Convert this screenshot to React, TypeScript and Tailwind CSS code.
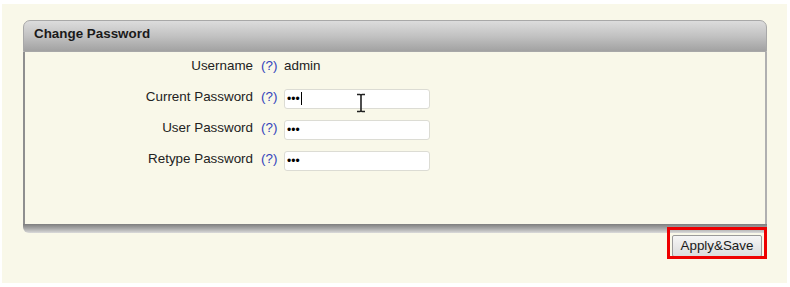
import React from "react";

const rows = [
  { label: "Current Password", caret: true },
  { label: "User Password" },
  { label: "Retype Password" },
];

function Help() {
  return <span className="mt-[2px] text-[#3344bb] w-[23px] shrink-0">(?)</span>;
}

export default function App() {
  return (
    <div className="w-[790px] h-[287px] bg-white" style={{ fontFamily: '"Liberation Sans", Arial, sans-serif' }}>
      <div className="relative ml-[2px] pt-[4px] w-[785px] h-[283px]">
        <div className="bg-[#f9f8e9] h-[279px] pt-[16px] pl-[21px] pr-[18px]">
          <div className="w-[744px]">
            <div className="h-[32px] rounded-t-[7px] border border-[#a8a8a8] bg-gradient-to-b from-[#dcdcdc] via-[#c2c2c2] to-[#a2a2a2] flex items-center pl-[10px] pb-[4px] text-[13.4px] font-bold text-[#1a1a1a]">
              Change Password
            </div>
            <div className="h-[172px] border-l-2 border-r-2 border-l-[#8f8f8f] border-r-[#b0b0b0] bg-[#f9f8e9] text-[13.4px] text-[#222]">
              <div className="h-[29px] pb-[2px] flex items-center">
                <span className="mt-[2px] w-[228px] text-right">Username</span>
                <span className="w-[8px]" />
                <Help />
                <span className="mt-[2px]">admin</span>
              </div>
              {rows.map((r) => (
                <div key={r.label} className="h-[31px] flex items-center">
                  <span className="mt-[2px] w-[228px] text-right">{r.label}</span>
                  <span className="w-[8px]" />
                  <Help />
                  <div className="mt-[4px] w-[146px] h-[20px] bg-white border border-[#dcdcd4] rounded-[3px] flex items-center pl-[2px] text-[12px] leading-none text-black">
                    <span>•••</span>
                    {r.caret && <span className="ml-[1px] w-[1px] h-[13px] bg-black" />}
                  </div>
                </div>
              ))}
            </div>
            <div className="h-[9px] rounded-bl-[6px] bg-gradient-to-b from-[#7e7e7e] via-[#a8a8a8] to-[#dadada]" />
            <div className="flex justify-end pr-[5px]">
              <div className="relative">
                <button className="w-[90px] h-[22px] border border-[#9a9a9a] rounded-[2px] bg-gradient-to-b from-[#f6f6f6] to-[#dcdcdc] text-[13.4px] text-[#1a1a1a]">
                  Apply&amp;Save
                </button>
                <div className="absolute left-[-5px] top-[-6px] w-[100px] h-[32px] border-[3px] border-[#ee0000]" />
              </div>
            </div>
          </div>
        </div>
        <svg className="absolute left-[353px] top-[93px]" width="12" height="20" viewBox="0 0 12 20">
          <path d="M2 1.5 H5 Q6 1.5 6 3 V17 Q6 18.5 5 18.5 H2 M10 1.5 H7 Q6 1.5 6 3 M10 18.5 H7 Q6 18.5 6 17" fill="none" stroke="#222" strokeWidth="1.6" />
        </svg>
      </div>
    </div>
  );
}
